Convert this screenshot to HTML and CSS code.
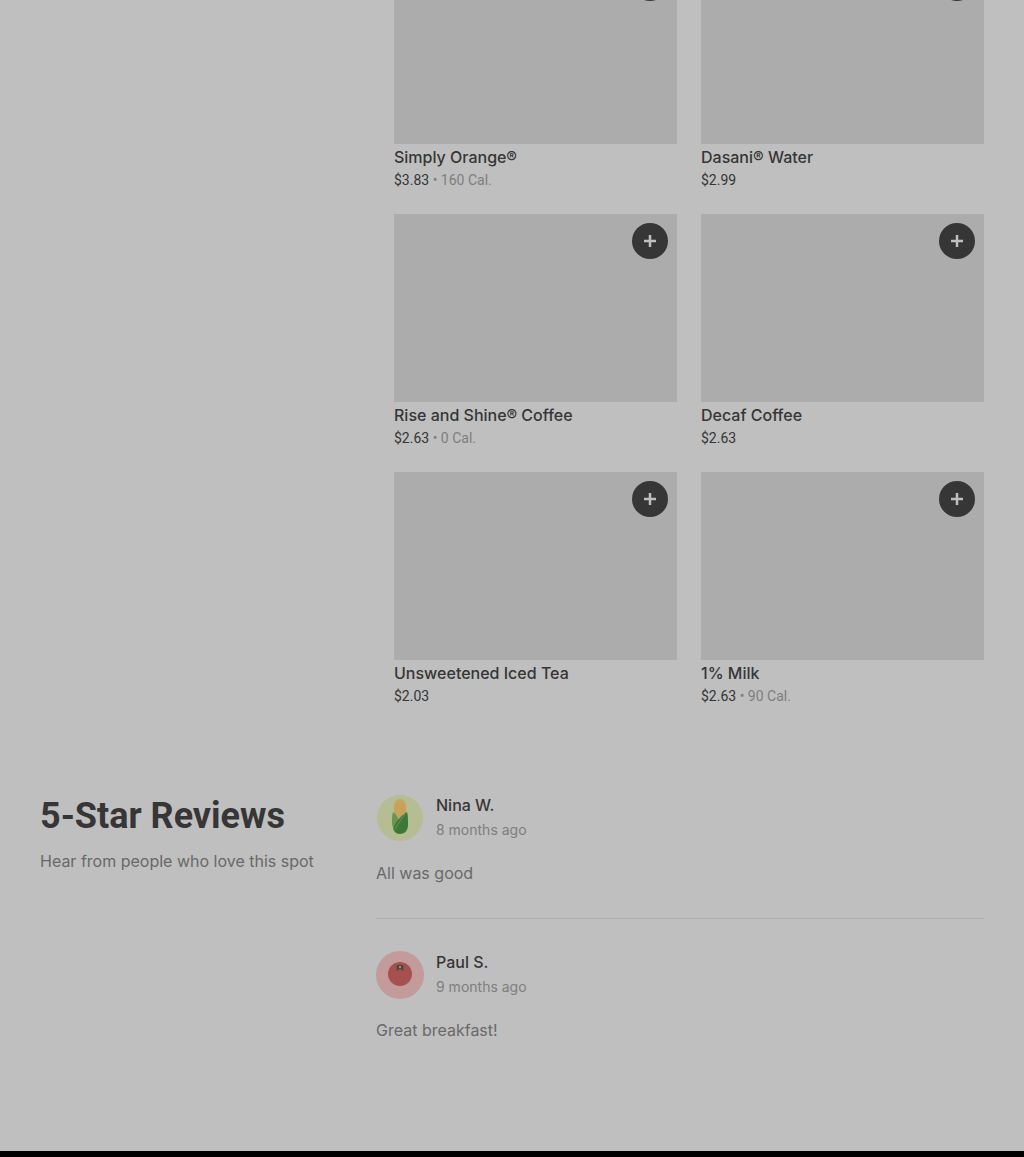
FILE: index.html
```html
<!DOCTYPE html>
<html lang="en">
<head>
    <meta charset="UTF-8">
    <meta name="viewport" content="width=device-width, initial-scale=1.0">
    <title>Menu and reviews</title>
    <link rel="stylesheet" href="styles.css">
</head>
<body>

<main>
    <section class="menu">
        <ul class="menu-grid">
            <li class="item">
                <div class="item-image"><button type="button" class="add" aria-label="Add Simply Orange"><svg viewBox="0 0 12 12"><path d="M6 0v12M0 6h12"/></svg></button></div>
                <h3>Simply Orange®</h3>
                <p class="price">$3.83 <span>• 160 Cal.</span></p>
            </li>
            <li class="item">
                <div class="item-image"><button type="button" class="add" aria-label="Add Dasani Water"><svg viewBox="0 0 12 12"><path d="M6 0v12M0 6h12"/></svg></button></div>
                <h3>Dasani® Water</h3>
                <p class="price">$2.99</p>
            </li>
            <li class="item">
                <div class="item-image"><button type="button" class="add" aria-label="Add Rise and Shine Coffee"><svg viewBox="0 0 12 12"><path d="M6 0v12M0 6h12"/></svg></button></div>
                <h3>Rise and Shine® Coffee</h3>
                <p class="price">$2.63 <span>• 0 Cal.</span></p>
            </li>
            <li class="item">
                <div class="item-image"><button type="button" class="add" aria-label="Add Decaf Coffee"><svg viewBox="0 0 12 12"><path d="M6 0v12M0 6h12"/></svg></button></div>
                <h3>Decaf Coffee</h3>
                <p class="price">$2.63</p>
            </li>
            <li class="item">
                <div class="item-image"><button type="button" class="add" aria-label="Add Unsweetened Iced Tea"><svg viewBox="0 0 12 12"><path d="M6 0v12M0 6h12"/></svg></button></div>
                <h3>Unsweetened Iced Tea</h3>
                <p class="price">$2.03</p>
            </li>
            <li class="item">
                <div class="item-image"><button type="button" class="add" aria-label="Add 1% Milk"><svg viewBox="0 0 12 12"><path d="M6 0v12M0 6h12"/></svg></button></div>
                <h3>1% Milk</h3>
                <p class="price">$2.63 <span>• 90 Cal.</span></p>
            </li>
        </ul>
    </section>

    <section class="reviews">
        <div class="reviews-intro">
            <h2>5-Star Reviews</h2>
            <p>Hear from people who love this spot</p>
        </div>
        <div class="reviews-list">
            <article class="review">
                <div class="reviewer">
                    <svg class="avatar" viewBox="0 0 48 48" aria-hidden="true">
                        <circle cx="24" cy="24" r="23" fill="#b5be92"/>
                        <path d="M18 12c0-4 3-7 6-7s6 3 6 7v14c0 4-3 7-6 7s-6-3-6-7z" fill="#c8a25a"/>
                        <path d="M17 18c3 2 5 5 6 9l-3 9c-3-2-4-4-4-7 0-4 0-8 1-11z" fill="#669650"/>
                        <path d="M31 18c1 3 1 7 1 13 0 5-3 9-8 9-3 0-6-2-7-5 2-7 8-13 14-17z" fill="#3e7838"/>
                        <path d="M18 36L29 20" stroke="#669650" stroke-width="1"/>
                    </svg>
                    <div>
                        <h3>Nina W.</h3>
                        <time>8 months ago</time>
                    </div>
                </div>
                <p class="review-text">All was good</p>
            </article>
            <article class="review">
                <div class="reviewer">
                    <svg class="avatar" viewBox="0 0 48 48" aria-hidden="true">
                        <circle cx="24" cy="24" r="24" fill="#c39b9b"/>
                        <circle cx="24" cy="23" r="12" fill="#a75050"/>
                        <path d="M20 15q4-3 8 0l-1 2 1 3-4-2-4 2 1-3z" fill="#4b4a3d"/>
                        <circle cx="24" cy="16" r="1" fill="#a8aa92"/>
                    </svg>
                    <div>
                        <h3>Paul S.</h3>
                        <time>9 months ago</time>
                    </div>
                </div>
                <p class="review-text">Great breakfast!</p>
            </article>
        </div>
    </section>
</main>

<footer class="footer"></footer>

</body>
</html>
```
FILE: styles.css
```css
* {
    box-sizing: border-box;
}

body {
    margin: 0;
    min-height: 100vh;
    display: flex;
    flex-direction: column;
    overflow: hidden;
    font-family: Inter, sans-serif;
    font-size: 16px;
    line-height: 22px;
    color: #363636;
    background-color: #bfbfbf;
}

h2,
h3,
p,
ul {
    margin: 0;
    padding: 0;
}

h3 {
    font-size: 16px;
    font-weight: 500;
    line-height: 22px;
}

.menu {
    margin-top: -44px;
    padding: 0 40px 0 394px;
}

.menu-grid {
    display: grid;
    grid-template-columns: 1fr 1fr;
    gap: 24px;
    list-style: none;
}

.item-image {
    position: relative;
    height: 188px;
    margin-bottom: 2px;
    background-color: #acacac;
}

.add {
    position: absolute;
    top: 9px;
    right: 9px;
    width: 36px;
    height: 36px;
    display: flex;
    align-items: center;
    justify-content: center;
    padding: 0;
    border: none;
    border-radius: 50%;
    background-color: #363636;
    cursor: pointer;
}

.add svg {
    width: 12px;
    height: 12px;
    stroke: #bfbfbf;
    stroke-width: 2.5;
}

.price {
    margin-top: 2px;
    font-family: Roboto, sans-serif;
    font-size: 14px;
    line-height: 20px;
}

.price span {
    color: #7e7e7e;
}

.reviews {
    display: grid;
    grid-template-columns: 312px 1fr;
    gap: 24px;
    padding: 88px 40px 110px;
}

.reviews-intro h2 {
    font-family: Roboto, sans-serif;
    font-size: 36px;
    font-weight: 700;
    line-height: 44px;
    margin-bottom: 12px;
}

.reviews-intro p,
.review-text {
    color: #696969;
}

.review + .review {
    margin-top: 34px;
    padding-top: 32px;
    border-top: 1px solid #b0b0b0;
}

.reviewer {
    display: flex;
    gap: 12px;
    margin-bottom: 20px;
}

.avatar {
    width: 48px;
    height: 48px;
}

.reviewer time {
    display: block;
    margin-top: 3px;
    font-size: 14px;
    color: #7e7e7e;
}

.footer {
    flex: 1;
    background-color: #000;
}
```
